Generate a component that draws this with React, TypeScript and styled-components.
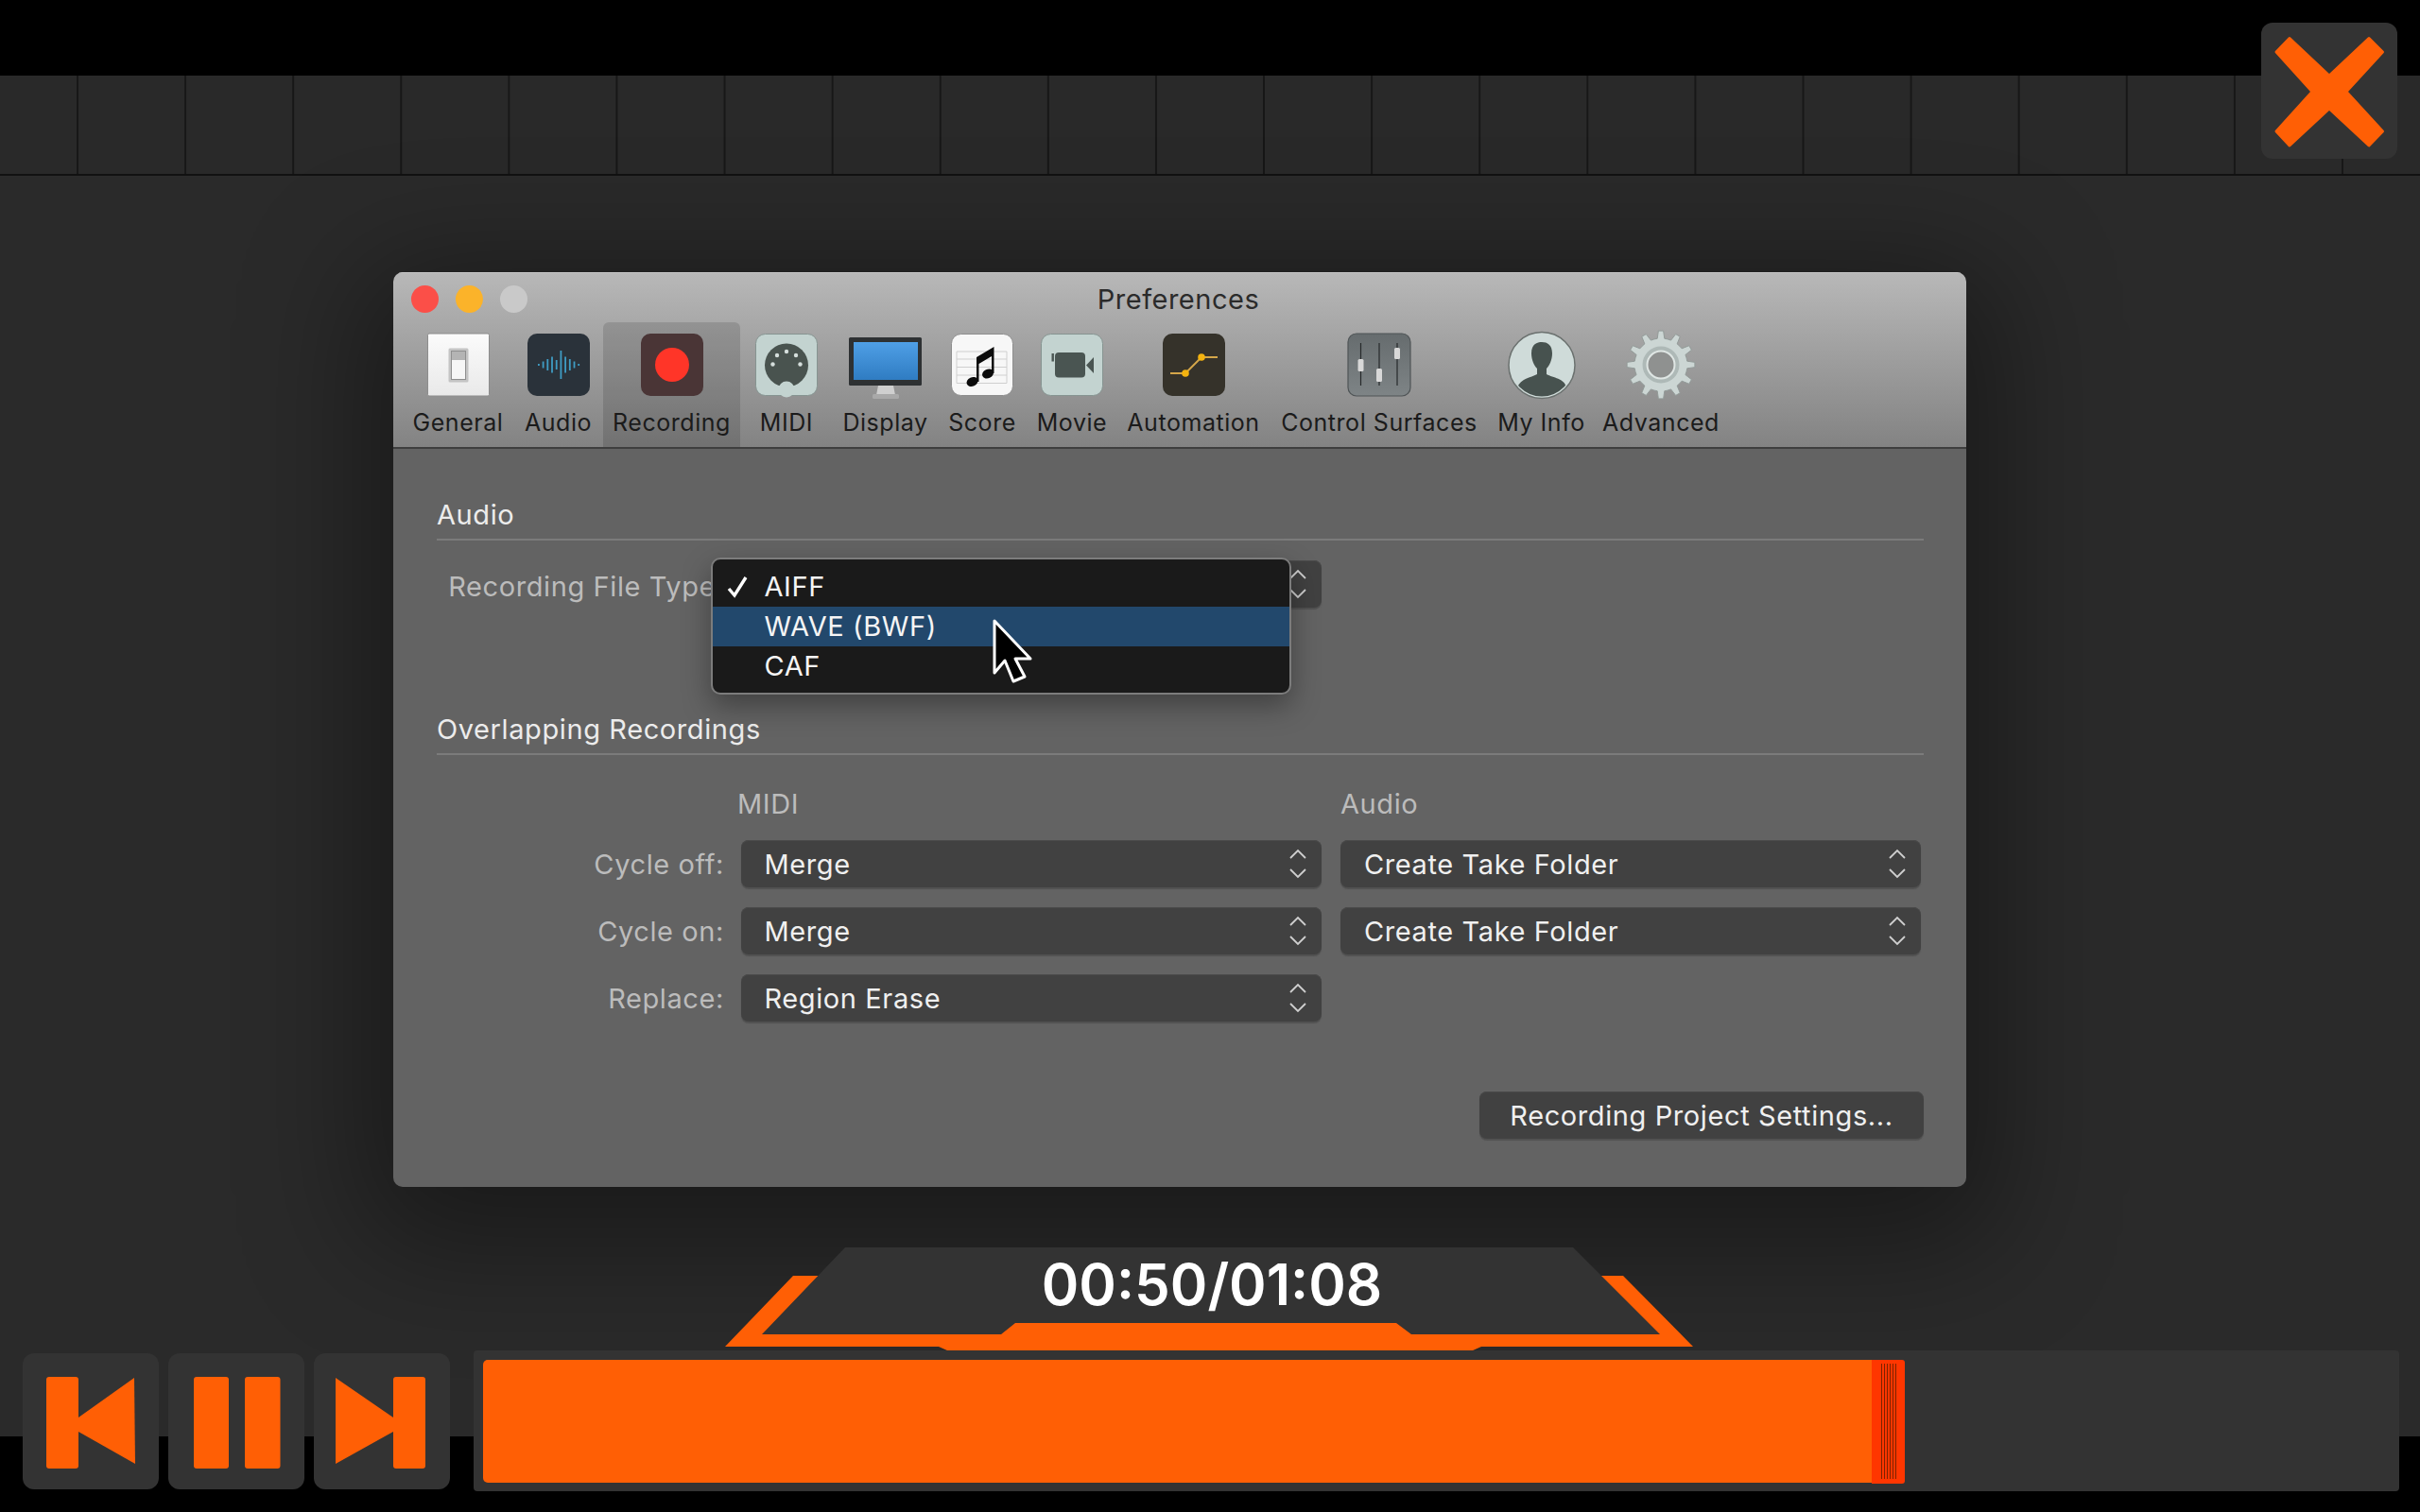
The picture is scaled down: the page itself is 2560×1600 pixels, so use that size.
import styled, { createGlobalStyle } from 'styled-components';

const ORANGE = '#ff5f05';

const GlobalStyle = createGlobalStyle`
  html, body {
    margin: 0;
    padding: 0;
    background: #000;
  }
  * {
    box-sizing: border-box;
  }
`;

const gearPath = (() => {
  const teeth = 12;
  const pts: string[] = [];
  for (let i = 0; i < teeth; i++) {
    const step = (Math.PI * 2) / teeth;
    const a = i * step - Math.PI / 2;
    const at = (r: number, t: number) =>
      `${(Math.cos(a + t) * r).toFixed(2)},${(Math.sin(a + t) * r).toFixed(2)}`;
    pts.push(at(28, -step * 0.5), at(28, -step * 0.26), at(36, -step * 0.14), at(36, step * 0.14), at(28, step * 0.26));
  }
  return `M${pts.join('L')}Z`;
})();

const Icon = ({ children }: { children: React.ReactNode }) => (
  <IconSvg viewBox="-40 -40 80 80">{children}</IconSvg>
);

const GeneralIcon = () => (
  <Icon>
    <defs>
      <linearGradient id="gen" x1="0" y1="0" x2="0" y2="1">
        <stop offset="0" stopColor="#fbfbfb" />
        <stop offset="1" stopColor="#e9e9e9" />
      </linearGradient>
    </defs>
    <rect x="-32.5" y="-33" width="65" height="66" rx="1.5" fill="url(#gen)" stroke="#8d8d8d" strokeWidth="1" />
    <rect x="-10.5" y="-17.5" width="21" height="36" rx="1.5" fill="#c4c4c4" />
    <rect x="-7.5" y="-14.5" width="15" height="30" fill="#f6f6f6" stroke="#8f8f8f" strokeWidth="1" />
    <rect x="-7" y="-14" width="14" height="9" fill="#b4b4b4" />
  </Icon>
);

const AudioIcon = () => (
  <Icon>
    <rect x="-33" y="-33" width="66" height="66" rx="10" fill="#2a323a" />
    {[1, 3.5, 6, 8.5, 5, 15, 8.5, 6, 3.5, 1].map((h, i) => (
      <rect key={i} x={-22 + i * 4.7} y={-h} width="1.8" height={h * 2} fill="#3f9cc4" />
    ))}
  </Icon>
);

const RecordingIcon = () => (
  <Icon>
    <rect x="-33" y="-33" width="66" height="66" rx="10" fill="#4a3536" />
    <circle cx="0" cy="0" r="18" fill="#ff3528" />
  </Icon>
);

const MidiIcon = () => (
  <Icon>
    <rect x="-32.5" y="-32.5" width="65" height="65" rx="10" fill="#c3d3d0" stroke="#869491" strokeWidth="1" />
    <circle cx="0" cy="0.5" r="23" fill="#49534f" />
    <circle cx="0" cy="26" r="8.5" fill="#c3d3d0" />
    {[
      [0, -14],
      [-10, -10],
      [10, -10],
      [-14.5, -0.5],
      [14.5, -0.5],
    ].map(([x, y]) => (
      <circle key={`${x}${y}`} cx={x} cy={y} r="2.2" fill="#d5dedc" />
    ))}
  </Icon>
);

const DisplayIcon = () => (
  <Icon>
    <defs>
      <linearGradient id="screen" x1="0" y1="0" x2="0" y2="1">
        <stop offset="0" stopColor="#4f9fe6" />
        <stop offset="1" stopColor="#2f7cc2" />
      </linearGradient>
    </defs>
    <path d="M-8,22 L8,22 L10,32 L-10,32 Z" fill="#cfcfcf" />
    <rect x="-14" y="31" width="28" height="5" rx="1.5" fill="#a9a9a9" />
    <rect x="-39" y="-29" width="77" height="51" rx="1.5" fill="#2e3133" />
    <rect x="-34" y="-24" width="68" height="40" fill="url(#screen)" />
  </Icon>
);

const ScoreIcon = () => (
  <Icon>
    <rect x="-32.5" y="-32.5" width="65" height="65" rx="10" fill="#f7f7f7" stroke="#8e8e8e" strokeWidth="1" />
    {[-14, -6, 2.5, 11, 19.5].map((y) => (
      <line key={y} x1="-27" x2="26" y1={y} y2={y} stroke="#cfcfcf" strokeWidth="1" />
    ))}
    <line x1="-27" x2="-27" y1="-14" y2="19.5" stroke="#cfcfcf" strokeWidth="1" />
    <line x1="26" x2="26" y1="-14" y2="19.5" stroke="#cfcfcf" strokeWidth="1" />
    <ellipse cx="-10.5" cy="18" rx="6.2" ry="4.8" transform="rotate(-25 -10.5 18)" fill="#0c0c0c" />
    <ellipse cx="6" cy="9.5" rx="6.2" ry="4.8" transform="rotate(-25 6 9.5)" fill="#0c0c0c" />
    <path d="M-6,18 L-6,-8 L12.5,-19 L12.5,9 L10,9 L10,-9 L-3.5,-1 L-3.5,18 Z" fill="#0c0c0c" />
  </Icon>
);

const MovieIcon = () => (
  <Icon>
    <rect x="-32.5" y="-32.5" width="65" height="65" rx="10" fill="#c3d3d0" stroke="#869491" strokeWidth="1" />
    <rect x="-18" y="-13" width="32" height="26.5" rx="4" fill="#4a5552" />
    <path d="M15,0.5 L23,-8 L23,9 Z" fill="#4a5552" />
    <rect x="-21.5" y="-12" width="2.4" height="8.5" fill="#4a5552" />
  </Icon>
);

const AutomationIcon = () => (
  <Icon>
    <rect x="-33" y="-33" width="66" height="66" rx="10" fill="#35322a" />
    <path d="M-25,9 L-9,9 L8,-8 L25,-8" fill="none" stroke="#d4a64a" strokeWidth="2" />
    <circle cx="-9" cy="9" r="3.8" fill="#f4b30f" />
    <circle cx="8" cy="-8" r="3.8" fill="#f4b30f" />
  </Icon>
);

const ControlSurfacesIcon = () => (
  <Icon>
    <defs>
      <linearGradient id="ctl" x1="0" y1="0" x2="0" y2="1">
        <stop offset="0" stopColor="#666c6e" />
        <stop offset="1" stopColor="#7e8486" />
      </linearGradient>
    </defs>
    <rect x="-33" y="-33" width="66" height="66" rx="9" fill="url(#ctl)" stroke="#4f5456" strokeWidth="1.2" />
    {[-19.5, 0, 19].map((x) => (
      <line key={x} x1={x} x2={x} y1="-23" y2="22" stroke="#26292a" strokeWidth="1.2" />
    ))}
    <rect x="-22.5" y="-6" width="6" height="13" rx="1.5" fill="#d8d8d8" />
    <rect x="-3" y="4" width="6" height="14" rx="1.5" fill="#d8d8d8" />
    <rect x="16" y="-18" width="6" height="12" rx="1.5" fill="#d8d8d8" />
  </Icon>
);

const MyInfoIcon = () => (
  <Icon>
    <defs>
      <clipPath id="face">
        <circle cx="0" cy="0.5" r="33" />
      </clipPath>
    </defs>
    <circle cx="0" cy="0.5" r="35" fill="#cfdbd9" stroke="#6b716f" strokeWidth="1.5" />
    <g clipPath="url(#face)">
      <path
        d="M-11,-12 C-11,-22 -5,-24 0,-24 C6,-24 11,-21 11,-12 C11,-5 8,1 5,4 L5,10 C12,14 24,14 26,24 L26,36 L-26,36 L-26,24 C-22,14 -12,14 -5,10 L-5,4 C-8,1 -11,-5 -11,-12 Z"
        fill="#47524f"
      />
    </g>
  </Icon>
);

const AdvancedIcon = () => (
  <Icon>
    <path d={gearPath} fill="#ccd6d4" stroke="#929a98" strokeWidth="1" />
    <circle cx="0" cy="0" r="19.5" fill="#aeb9b7" />
    <circle cx="0" cy="0" r="14.5" fill="#8f9190" stroke="#dfe6e4" strokeWidth="2" />
  </Icon>
);

const TOOLS = [
  { label: 'General', width: 117, icon: <GeneralIcon /> },
  { label: 'Audio', width: 95, icon: <AudioIcon /> },
  { label: 'Recording', width: 145, icon: <RecordingIcon />, active: true },
  { label: 'MIDI', width: 98, icon: <MidiIcon /> },
  { label: 'Display', width: 111, icon: <DisplayIcon /> },
  { label: 'Score', width: 94, icon: <ScoreIcon /> },
  { label: 'Movie', width: 96, icon: <MovieIcon /> },
  { label: 'Automation', width: 161, icon: <AutomationIcon /> },
  { label: 'Control Surfaces', width: 232, icon: <ControlSurfacesIcon /> },
  { label: 'My Info', width: 111, icon: <MyInfoIcon /> },
  { label: 'Advanced', width: 142, icon: <AdvancedIcon /> },
];

const Stepper = () => (
  <StepperSvg viewBox="0 0 20 32">
    <path d="M2,10 L10,2 L18,10 M2,22 L10,30 L18,22" fill="none" stroke="#cfcfcf" strokeWidth="1.8" />
  </StepperSvg>
);

const Select = ({ value }: { value: string }) => (
  <SelectBox>
    {value}
    <Stepper />
  </SelectBox>
);

const App = () => (
  <Page>
    <GlobalStyle />
    <TopBar />
    <Ruler />
    <CloseButton aria-label="Close">
      <svg width="144" height="144" viewBox="0 0 144 144">
        <path
          d="M16,31 L30,16.5 L72,56 L114,16.5 L128.5,31 L90,73 L128.5,115 L114,130 L72,91 L30,130 L16,115 L54,73 Z"
          fill={ORANGE}
          stroke={ORANGE}
          strokeWidth="3"
          strokeLinejoin="round"
        />
      </svg>
    </CloseButton>

    <Stage>
      <Window>
        <TitleBar>
          <TitleRow>
            <Lights>
              <Light $color="#fb4f48" />
              <Light $color="#fbb32a" />
              <Light $color="#c9c9c9" />
            </Lights>
            <Title>Preferences</Title>
          </TitleRow>
          <Toolbar>
            {TOOLS.map((tool) => (
              <Tool key={tool.label} $width={tool.width} $active={!!tool.active}>
                {tool.icon}
                <ToolLabel>{tool.label}</ToolLabel>
              </Tool>
            ))}
          </Toolbar>
        </TitleBar>

        <Body>
          <Heading>Audio</Heading>
          <FormRow>
            <RecordingLabel>Recording File Type:</RecordingLabel>
            <MenuAnchor>
              <Select value="AIFF" />
              <Menu>
                <MenuItem>
                  <CheckSvg viewBox="0 0 24 24">
                    <path d="M3,14 L9,21 L21,2" fill="none" stroke="#fff" strokeWidth="3.4" />
                  </CheckSvg>
                  AIFF
                </MenuItem>
                <MenuItem $active>WAVE (BWF)</MenuItem>
                <MenuItem>CAF</MenuItem>
                <CursorSvg viewBox="0 0 50 74">
                  <path
                    d="M5,4 L5,59 L16,46 L25,68 L37,63 L27,44 L43,44 Z"
                    fill="#000"
                    stroke="#fff"
                    strokeWidth="3"
                    strokeLinejoin="round"
                  />
                </CursorSvg>
              </Menu>
            </MenuAnchor>
          </FormRow>

          <SecondHeading>Overlapping Recordings</SecondHeading>
          <ColumnHeads>
            <ColumnHead>MIDI</ColumnHead>
            <ColumnHead>Audio</ColumnHead>
          </ColumnHeads>
          <FormRow>
            <RowLabel>Cycle off:</RowLabel>
            <Select value="Merge" />
            <Select value="Create Take Folder" />
          </FormRow>
          <FormRow>
            <RowLabel>Cycle on:</RowLabel>
            <Select value="Merge" />
            <Select value="Create Take Folder" />
          </FormRow>
          <FormRow>
            <RowLabel>Replace:</RowLabel>
            <Select value="Region Erase" />
          </FormRow>
          <ButtonRow>
            <ActionButton>Recording Project Settings...</ActionButton>
          </ButtonRow>
        </Body>
      </Window>

      <TimePanel>
        <svg width="1040" height="115" viewBox="760 1315 1040 115">
          <polygon
            points="839,1350 1717,1350 1791,1425 1567,1425 1558,1429 1002,1429 993,1425 767,1425"
            fill={ORANGE}
          />
          <polygon
            points="894,1320 1664,1320 1756,1412 1493,1412 1477,1400 1074,1400 1059,1412 806,1412"
            fill="#333333"
          />
        </svg>
        <TimeText>00:50/01:08</TimeText>
      </TimePanel>

      <Transport>
        <TransportButton aria-label="Previous">
          <svg width="144" height="144" viewBox="0 0 144 144">
            <rect x="25" y="25" width="34" height="97" rx="3" fill={ORANGE} />
            <path d="M59,68 L118,26 L119,117 L59,83 Z" fill={ORANGE} />
          </svg>
        </TransportButton>
        <TransportButton aria-label="Pause">
          <svg width="144" height="144" viewBox="0 0 144 144">
            <rect x="27" y="25" width="37" height="97" rx="3" fill={ORANGE} />
            <rect x="81" y="25" width="37.5" height="97" rx="3" fill={ORANGE} />
          </svg>
        </TransportButton>
        <TransportButton aria-label="Next">
          <svg width="144" height="144" viewBox="0 0 144 144">
            <path d="M23,26 L84,68 L84,83 L23,117 Z" fill={ORANGE} />
            <rect x="84" y="25" width="34" height="97" rx="3" fill={ORANGE} />
          </svg>
        </TransportButton>
        <Track>
          <Fill />
          <Thumb />
        </Track>
      </Transport>
    </Stage>
  </Page>
);

const Page = styled.div`
  position: relative;
  width: 2560px;
  height: 1600px;
  display: flex;
  flex-direction: column;
  overflow: hidden;
  font-family: Inter, 'Liberation Sans', sans-serif;
  background: #000;
`;

const TopBar = styled.div`
  height: 80px;
  background: #000;
`;

const Ruler = styled.div`
  height: 106px;
  background-color: #292929;
  background-image: linear-gradient(to right, #171717 2px, transparent 2px);
  background-size: 114.1px 100%;
  background-position: 81px 0;
  border-bottom: 2px solid #111;
`;

const CloseButton = styled.button`
  position: absolute;
  top: 24px;
  left: 2392px;
  width: 144px;
  height: 144px;
  padding: 0;
  border: none;
  border-radius: 12px;
  background: #333;
`;

const Stage = styled.div`
  position: relative;
  flex: 1;
  display: flex;
  flex-direction: column;
  padding-top: 102px;
  background: linear-gradient(to bottom, #2a2a2a 1334px, #000 1334px);
`;

const Window = styled.div`
  width: 1664px;
  height: 968px;
  margin-left: 416px;
  border-radius: 10px;
  overflow: hidden;
  display: flex;
  flex-direction: column;
  box-shadow: 0 30px 130px 30px rgba(0, 0, 0, 0.4);
`;

const TitleBar = styled.div`
  height: 187px;
  background: linear-gradient(to bottom, #b8b8b8, #838383);
  box-shadow: inset 0 1px 0 #c6c6c6;
  border-bottom: 2px solid #3e3e3e;
`;

const TitleRow = styled.div`
  height: 56px;
  display: grid;
  grid-template-columns: 1fr auto 1fr;
  align-items: center;
  padding: 0 19px;
`;

const Lights = styled.div`
  display: flex;
  gap: 18px;
`;

const Light = styled.span<{ $color: string }>`
  width: 29px;
  height: 29px;
  border-radius: 50%;
  background: ${(p) => p.$color};
`;

const Title = styled.div`
  font-size: 29px;
  letter-spacing: 0.5px;
  color: #2b2b2b;
  margin-right: 3px;
`;

const Toolbar = styled.div`
  height: 132px;
  margin-top: -3px;
  display: flex;
  padding-left: 10px;
`;

const Tool = styled.div<{ $width: number; $active: boolean }>`
  width: ${(p) => p.$width}px;
  display: flex;
  flex-direction: column;
  align-items: center;
  padding-top: 5px;
  border-radius: 6px 6px 0 0;
  background: ${(p) => (p.$active ? 'rgba(0, 0, 0, 0.13)' : 'transparent')};
`;

const IconSvg = styled.svg`
  width: 80px;
  height: 80px;
  flex: none;
`;

const ToolLabel = styled.div`
  margin-top: 4px;
  line-height: 34px;
  font-size: 25px;
  letter-spacing: 0.55px;
  white-space: nowrap;
  color: #1b1b1b;
`;

const Body = styled.div`
  flex: 1;
  padding: 52px 45px 0 46px;
  background: #636363;
  font-size: 29px;
  letter-spacing: 0.6px;
`;

const Heading = styled.div`
  line-height: 36px;
  padding-bottom: 7px;
  border-bottom: 2px solid #7b7b7b;
  color: #ececec;
`;

const SecondHeading = styled(Heading)`
  margin-top: 111px;
`;

const FormRow = styled.div`
  display: flex;
  align-items: center;
  gap: 20.5px;
  margin-top: 21px;
`;

const RowLabel = styled.div`
  width: 304px;
  margin-right: -3px;
  flex: none;
  text-align: right;
  white-space: nowrap;
  color: #bcbcbc;
`;

const RecordingLabel = styled(RowLabel)`
  padding-top: 4px;
`;

const MenuAnchor = styled.div`
  position: relative;
`;

const SelectBox = styled.div`
  position: relative;
  width: 614px;
  height: 50px;
  display: flex;
  align-items: center;
  justify-content: space-between;
  padding: 0 15px 0 25px;
  border-radius: 8px;
  background: #414141;
  box-shadow: 0 2px 1px #515151, inset 0 1px 0 #4a4a4a;
  color: #f0f0f0;
`;

const StepperSvg = styled.svg`
  width: 20px;
  height: 32px;
`;

const Menu = styled.div`
  position: absolute;
  top: -3px;
  left: -32px;
  width: 614px;
  height: 145px;
  padding: 8px 0 7px;
  border: 2px solid #7c7c7c;
  border-radius: 10px;
  background: #1a1a1a;
  box-shadow: 0 12px 30px rgba(0, 0, 0, 0.35);
`;

const MenuItem = styled.div<{ $active?: boolean }>`
  position: relative;
  height: 42px;
  line-height: 42px;
  padding-left: 55px;
  color: #f5f5f5;
  background: ${(p) => (p.$active ? '#22486c' : 'transparent')};
`;

const CheckSvg = styled.svg`
  position: absolute;
  top: 9px;
  left: 14px;
  width: 24px;
  height: 24px;
`;

const CursorSvg = styled.svg`
  position: absolute;
  top: 61px;
  left: 293px;
  width: 50px;
  height: 74px;
`;

const ColumnHeads = styled.div`
  display: flex;
  margin-top: 35px;
  margin-bottom: 2px;
  padding-left: 318px;
`;

const ColumnHead = styled.div`
  width: 638px;
  flex: none;
  line-height: 34px;
  color: #bcbcbc;
`;

const ButtonRow = styled.div`
  display: flex;
  justify-content: flex-end;
  margin-top: 74px;
`;

const ActionButton = styled.button`
  width: 470px;
  height: 50px;
  padding: 0;
  border: none;
  border-radius: 8px;
  background: #414141;
  box-shadow: 0 2px 1px #515151, inset 0 1px 0 #4a4a4a;
  font-family: inherit;
  font-size: inherit;
  letter-spacing: inherit;
  color: #f0f0f0;
`;

const TimePanel = styled.div`
  position: absolute;
  top: 1129px;
  left: 760px;
  width: 1040px;
  height: 115px;
`;

const TimeText = styled.div`
  position: absolute;
  top: 0;
  left: 0;
  width: 1044px;
  height: 88px;
  line-height: 88px;
  text-align: center;
  font-size: 60px;
  font-weight: 600;
  color: #fff;
`;

const Transport = styled.div`
  margin-top: 173px;
  padding-left: 24px;
  display: flex;
  align-items: flex-start;
  gap: 10px;
`;

const TransportButton = styled.button`
  width: 144px;
  height: 144px;
  margin-top: 3px;
  padding: 0;
  border: none;
  border-radius: 12px;
  background: #333;
  flex: none;
`;

const Track = styled.div`
  width: 2037px;
  height: 149px;
  margin-left: 15px;
  padding: 10px;
  display: flex;
  border-radius: 4px;
  background: #333;
`;

const Fill = styled.div`
  width: 1469px;
  height: 130px;
  border-radius: 5px 0 0 5px;
  background: ${ORANGE};
`;

const Thumb = styled.div`
  width: 35px;
  height: 131px;
  border-radius: 0 3px 3px 0;
  background:
    repeating-linear-gradient(to right, #7c2200 0 1px, transparent 1px 3px) 10px 4px / 16px 122px no-repeat,
    #ff3600;
`;

export default App;
